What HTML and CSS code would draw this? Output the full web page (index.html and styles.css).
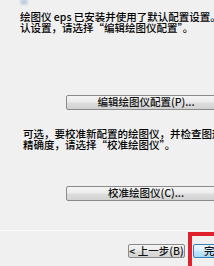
FILE: index.html
```html
<!DOCTYPE html>
<html>
<head>
<meta charset="utf-8">
<link rel="stylesheet" href="styles.css">
</head>
<body>
<div class="page">
  <div class="topstrip"><span class="blob"></span></div>
  <div class="content">
    <p class="para p1">绘图仪 eps 已安装并使用了默认配置设置。默<br>认设置，请选择“编辑绘图仪配置”。</p>
    <div class="btnrow r1"><div class="btn wide">编辑绘图仪配置(P)...</div></div>
    <p class="para p2">可选，要校准新配置的绘图仪，并检查图形尺寸<br>精确度，请选择“校准绘图仪”。</p>
    <div class="btnrow r2"><div class="btn wide">校准绘图仪(C)...</div></div>
  </div>
  <div class="sep"></div>
  <div class="footer">
    <div class="btn small">&lt; 上一步(B)</div>
    <div class="focusbox"><div class="btn default">完成</div></div>
  </div>
</div>
</body>
</html>
```
FILE: styles.css
```css
html, body {
  margin: 0;
  padding: 0;
  background: #f0f0f0;
  overflow: hidden;
}
.page {
  width: 214px;
  height: 266px;
  display: flex;
  flex-direction: column;
  font-family: "Noto Sans CJK SC", "DejaVu Sans", sans-serif;
  font-size: 10.5px;
  font-weight: 500;
  color: #000;
  overflow: hidden;
}
.topstrip {
  height: 5px;
  background: linear-gradient(#fafafa, #f3f3f3);
  position: relative;
}
.blob {
  position: absolute;
  left: 19px;
  top: -2px;
  width: 10px;
  height: 8px;
  background: radial-gradient(ellipse at center, #b9c6d8 0%, #d6dde8 50%, rgba(240,240,240,0) 80%);
}
.content {
  display: flex;
  flex-direction: column;
}
.para {
  margin: 0;
  padding-left: 20px;
  line-height: 11px;
  white-space: nowrap;
}
.p1 { margin-top: 11px; }
.p2 { margin-top: 18px; padding-left: 23px; }
.btnrow {
  padding-left: 66px;
  display: flex;
}
.r1 { margin-top: 62px; }
.r2 { margin-top: 36px; }
.btn {
  box-sizing: border-box;
  border: 1px solid #8a8a8a;
  border-radius: 2px;
  background: linear-gradient(#f4f4f4 0%, #ececec 45%, #dddddd 55%, #d2d2d2 100%);
  display: flex;
  align-items: center;
  justify-content: center;
  white-space: nowrap;
  line-height: 1;
  color: #111;
}
.wide {
  width: 160px;
  height: 15px;
  flex: none;
}
.sep {
  margin-top: 29px;
  height: 1px;
  background: #a8a8a8;
  border-bottom: 1px solid #fbfbfb;
}
.footer {
  display: flex;
  align-items: flex-start;
  padding-left: 128px;
  margin-top: 1px;
}
.small {
  width: 57px;
  height: 14px;
  margin-top: 12px;
  flex: none;
}
.focusbox {
  margin-left: 3px;
  border: 4px solid #e0202a;
  border-right: none;
  border-bottom: none;
  padding: 8px 0 0 1px;
  width: 40px;
  height: 40px;
  flex: none;
}
.default {
  width: 60px;
  height: 14px;
  border-color: #3c7fb1;
  background: linear-gradient(#eaf6fd 0%, #d9f0fc 45%, #bee6fd 55%, #a7d9f5 100%);
  justify-content: flex-start;
  padding-left: 10px;
}
```
